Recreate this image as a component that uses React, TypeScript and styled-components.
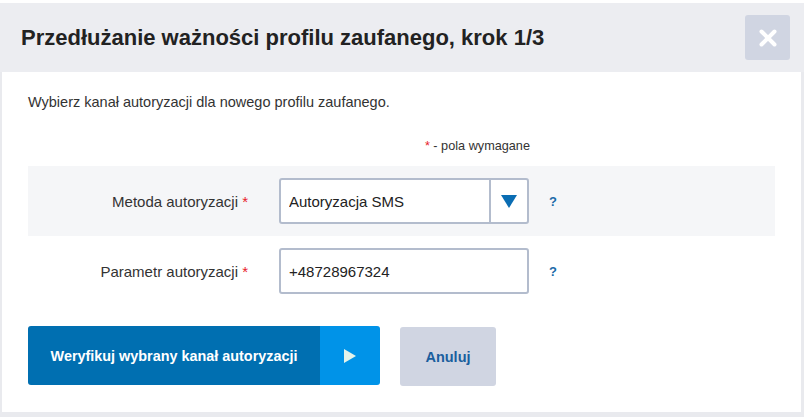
import React, { useState } from 'react';
import styled, { createGlobalStyle } from 'styled-components';

const GlobalStyle = createGlobalStyle`
  html, body {
    margin: 0;
    padding: 0;
    background: #ffffff;
    font-family: 'Liberation Sans', Arial, sans-serif;
  }
`;

// Dialog shell
const Page = styled.div`
  width: 804px;
  height: 417px;
  padding-top: 3px;
  box-sizing: border-box;
  background: #ffffff;
`;

const Dialog = styled.div`
  width: 804px;
  box-sizing: border-box;
  border-left: 2px solid #e9eaee;
  border-right: 3px solid #e9eaee;
  border-bottom: 5px solid #e9eaee;
  background: #ffffff;
`;

const Header = styled.div`
  height: 69px;
  margin-left: -2px;
  margin-right: -3px;
  background: #ecedf1;
  display: flex;
  align-items: center;
  justify-content: space-between;
  padding: 0 14px 0 21px;
`;

const Title = styled.h1`
  margin: 0;
  font-size: 22px;
  font-weight: bold;
  color: #222222;
`;

const CloseButton = styled.button`
  width: 45px;
  height: 45px;
  border: none;
  border-radius: 3px;
  background: #d0d5e2;
  display: flex;
  align-items: center;
  justify-content: center;
  padding: 0;
  cursor: pointer;
`;

const Body = styled.div`
  padding: 20px 26px 26px 26px;
`;

const Intro = styled.p`
  margin: 0;
  font-size: 14.5px;
  line-height: 20px;
  color: #333333;
`;

const Required = styled.p`
  margin: 24px 0 10px 0;
  padding-right: 245px;
  text-align: right;
  font-size: 12.7px;
  line-height: 20px;
  color: #333333;
`;

const Star = styled.span`
  color: #e8202a;
`;

const FormRow = styled.div<{ $shaded: boolean }>`
  height: 70px;
  display: grid;
  grid-template-columns: 220px 281px auto;
  align-items: center;
  background: ${({ $shaded }) => ($shaded ? '#f5f6f8' : 'transparent')};
`;

const Label = styled.label`
  text-align: right;
  font-size: 15px;
  color: #333333;
`;

const Field = styled.div`
  margin-left: 31px;
  height: 46px;
  box-sizing: border-box;
  border: 2px solid #b3bccd;
  border-radius: 3px;
  background: #ffffff;
  display: flex;
  align-items: stretch;
`;

const Value = styled.input`
  flex: 1;
  min-width: 0;
  border: none;
  outline: none;
  background: transparent;
  padding: 0 8px;
  font-family: 'Liberation Sans', Arial, sans-serif;
  font-size: 15px;
  color: #222222;
`;

const Caret = styled.div`
  width: 36px;
  border-left: 2px solid #b3bccd;
  display: flex;
  align-items: center;
  justify-content: center;
`;

const Help = styled.span`
  margin-left: 20px;
  font-size: 13px;
  font-weight: bold;
  color: #1b6aa8;
`;

const Actions = styled.div`
  margin-top: 20px;
  display: flex;
  gap: 20px;
  align-items: flex-start;
`;

const PrimaryButton = styled.button`
  height: 59px;
  width: 352px;
  border: none;
  border-radius: 3px;
  padding: 0;
  display: flex;
  overflow: hidden;
  cursor: pointer;
  font-family: 'Liberation Sans', Arial, sans-serif;
`;

const PrimaryLabel = styled.span`
  flex: 1;
  background: #006fb1;
  color: #ffffff;
  font-size: 14.4px;
  font-weight: bold;
  display: flex;
  align-items: center;
  justify-content: center;
`;

const PrimaryArrow = styled.span`
  width: 60px;
  background: #0093e8;
  display: flex;
  align-items: center;
  justify-content: center;
`;

const CancelButton = styled.button`
  height: 59px;
  width: 96px;
  margin-top: 1px;
  border: none;
  border-radius: 3px;
  background: #d0d5e2;
  color: #1a5f9e;
  font-family: 'Liberation Sans', Arial, sans-serif;
  font-size: 14.5px;
  font-weight: bold;
  cursor: pointer;
`;

export default function App() {
  const [method, setMethod] = useState('Autoryzacja SMS');
  const [phone, setPhone] = useState('+48728967324');

  return (
    <Page>
      <GlobalStyle />
      <Dialog>
        <Header>
          <Title>Przedłużanie ważności profilu zaufanego, krok 1/3</Title>
          <CloseButton aria-label="Zamknij">
            <svg width="18" height="18" viewBox="0 0 18 18">
              <path d="M2.5 2.5 L15.5 15.5 M15.5 2.5 L2.5 15.5" stroke="#ffffff" strokeWidth="4" strokeLinecap="round" />
            </svg>
          </CloseButton>
        </Header>
        <Body>
          <Intro>Wybierz kanał autoryzacji dla nowego profilu zaufanego.</Intro>
          <Required>
            <Star>*</Star> - pola wymagane
          </Required>

          <FormRow $shaded>
            <Label>
              Metoda autoryzacji <Star>*</Star>
            </Label>
            <Field>
              <Value value={method} onChange={(e) => setMethod(e.target.value)} readOnly />
              <Caret>
                <svg width="16" height="13" viewBox="0 0 16 13">
                  <path d="M0 0 H16 L8 13 Z" fill="#0a6db3" />
                </svg>
              </Caret>
            </Field>
            <Help>?</Help>
          </FormRow>

          <FormRow $shaded={false}>
            <Label>
              Parametr autoryzacji <Star>*</Star>
            </Label>
            <Field>
              <Value value={phone} onChange={(e) => setPhone(e.target.value)} />
            </Field>
            <Help>?</Help>
          </FormRow>

          <Actions>
            <PrimaryButton>
              <PrimaryLabel>Weryfikuj wybrany kanał autoryzacji</PrimaryLabel>
              <PrimaryArrow>
                <svg width="12" height="14" viewBox="0 0 12 14">
                  <path d="M0 0 L12 7 L0 14 Z" fill="#e4f3ea" />
                </svg>
              </PrimaryArrow>
            </PrimaryButton>
            <CancelButton>Anuluj</CancelButton>
          </Actions>
        </Body>
      </Dialog>
    </Page>
  );
}
